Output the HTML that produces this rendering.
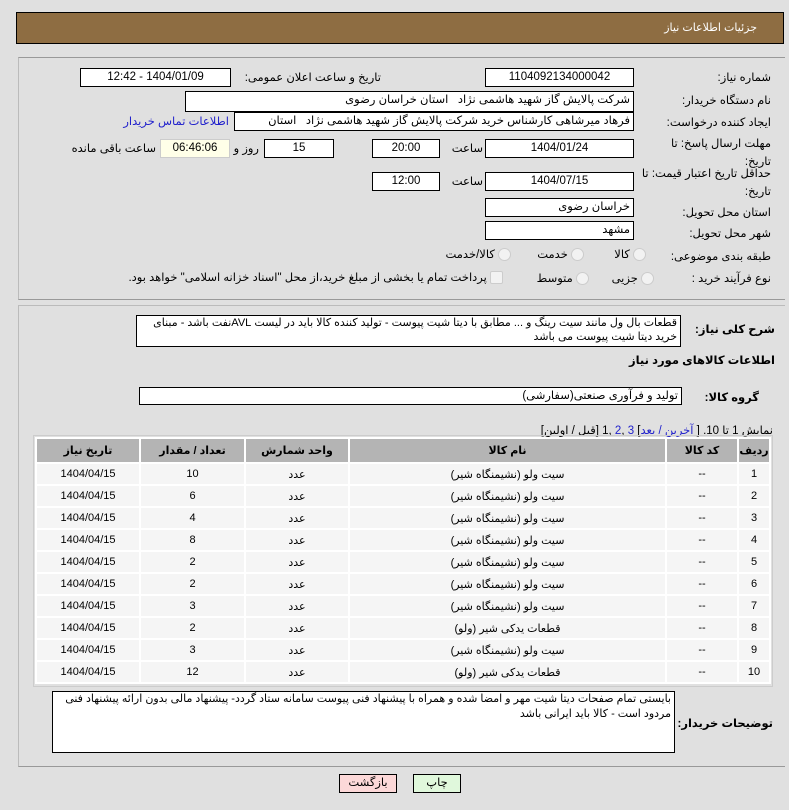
<!DOCTYPE html>
<html><head><meta charset="utf-8"><style>
body{margin:0;width:789px;height:810px;background:#e0e0e0;font-family:"Liberation Sans","DejaVu Sans",sans-serif;font-size:11px;color:#000;position:relative;overflow:hidden}
.a{position:absolute}
.box{position:absolute;background:#fff;border:1px solid #000;box-sizing:border-box;font-size:11.5px;line-height:17px;text-align:center;direction:rtl;white-space:nowrap;overflow:hidden}
.l{position:absolute;direction:rtl;white-space:nowrap;font-size:11.5px}
.b{font-weight:bold}
table{border-collapse:collapse;position:absolute;left:35px;top:437px;width:736px;font-size:11px;direction:rtl}
td,th{border:2px solid #fff;text-align:center;height:20px;padding:0}
th{background:#b4b4b4;height:23px}
td{background:#f5f5f5}
.rad{display:inline-block;width:11px;height:11px;border-radius:50%;border:1px solid #ccc;background:#f2f2f2;vertical-align:middle}
</style></head><body>
<div class="a" style="left:16px;top:12px;width:768px;height:32px;background:#8e6d42;border:1px solid #000;box-sizing:border-box"></div>
<div class="l" style="right:32px;top:21px;color:#fff;font-size:11px">جزئیات اطلاعات نیاز</div>
<div class="a" style="left:18px;top:57px;width:766px;height:241px;border-top:1px solid #999;border-left:1px solid #bbb;border-bottom:1px solid #999"></div>
<div class="a" style="left:18px;top:305px;width:766px;height:460px;border-top:1px solid #bbb;border-left:1px solid #bbb;border-bottom:1px solid #999"></div>

<div class="l" style="right:18px;top:70px">شماره نیاز:</div>
<div class="box" style="left:485px;top:68px;width:149px;height:19px">1104092134000042</div>
<div class="l" style="right:408px;top:70px">تاریخ و ساعت اعلان عمومی:</div>
<div class="box" style="left:80px;top:68px;width:151px;height:19px">1404/01/09 - 12:42</div>

<div class="l" style="right:18px;top:93px">نام دستگاه خریدار:</div>
<div class="box" style="left:185px;top:91px;width:449px;height:21px;text-align:right;padding-right:3px">شرکت پالایش گاز شهید هاشمی نژاد &nbsp; استان خراسان رضوی</div>

<div class="l" style="right:18px;top:115px">ایجاد کننده درخواست:</div>
<div class="box" style="left:234px;top:112px;width:400px;height:19px;text-align:right;padding-right:3px">فرهاد میرشاهی کارشناس خرید شرکت پالایش گاز شهید هاشمی نژاد &nbsp; استان</div>
<div class="l" style="right:560px;top:114px;color:#2222cc">اطلاعات تماس خریدار</div>

<div class="l" style="right:18px;top:135px;line-height:18px">مهلت ارسال پاسخ: تا<br>تاریخ:</div>
<div class="box" style="left:485px;top:139px;width:149px;height:19px">1404/01/24</div>
<div class="l" style="right:306px;top:141px">ساعت</div>
<div class="box" style="left:372px;top:139px;width:68px;height:19px">20:00</div>
<div class="box" style="left:264px;top:139px;width:70px;height:19px">15</div>
<div class="l" style="right:530px;top:141px">روز و</div>
<div class="box" style="left:160px;top:139px;width:70px;height:19px;background:#ffffe8;border-color:#ccc">06:46:06</div>
<div class="l" style="right:633px;top:141px">ساعت باقی مانده</div>

<div class="l" style="right:18px;top:165px;line-height:18px">حداقل تاریخ اعتبار قیمت: تا<br>تاریخ:</div>
<div class="box" style="left:485px;top:172px;width:149px;height:19px">1404/07/15</div>
<div class="l" style="right:306px;top:174px">ساعت</div>
<div class="box" style="left:372px;top:172px;width:68px;height:19px">12:00</div>

<div class="l" style="right:18px;top:205px">استان محل تحویل:</div>
<div class="box" style="left:485px;top:198px;width:149px;height:19px;text-align:right;padding-right:3px">خراسان رضوی</div>
<div class="l" style="right:18px;top:226px">شهر محل تحویل:</div>
<div class="box" style="left:485px;top:221px;width:149px;height:19px;text-align:right;padding-right:3px">مشهد</div>

<div class="l" style="right:18px;top:249px">طبقه بندی موضوعی:</div>
<div class="l" style="right:143px;top:247px"><span class="rad"></span> کالا</div>
<div class="l" style="right:205px;top:247px"><span class="rad"></span> خدمت</div>
<div class="l" style="right:278px;top:247px"><span class="rad"></span> کالا/خدمت</div>
<div class="l" style="right:18px;top:271px">نوع فرآیند خرید :</div>
<div class="l" style="right:135px;top:271px"><span class="rad"></span> جزیی</div>
<div class="l" style="right:200px;top:271px"><span class="rad"></span> متوسط</div>
<div class="l" style="right:286px;top:270px"><span class="rad" style="border-radius:2px"></span> پرداخت تمام یا بخشی از مبلغ خرید،از محل "اسناد خزانه اسلامی" خواهد بود.</div>

<div class="l b" style="right:14px;top:322px">شرح کلی نیاز:</div>
<div class="box" style="left:136px;top:315px;width:545px;height:32px;text-align:right;padding-right:3px;white-space:normal;line-height:14px;font-size:11px">قطعات بال ول مانند سیت رینگ و ...  مطابق با دیتا شیت پیوست - تولید کننده کالا باید در لیست AVLنفت باشد - مبنای خرید دیتا شیت پیوست می باشد</div>
<div class="l b" style="right:14px;top:353px">اطلاعات کالاهای مورد نیاز</div>
<div class="l b" style="right:30px;top:390px">گروه کالا:</div>
<div class="box" style="left:139px;top:387px;width:543px;height:18px;text-align:right;padding-right:3px;line-height:16px">تولید و فرآوری صنعتی(سفارشی)</div>
<div class="l" style="right:16px;top:423px">نمایش 1 تا 10. [ <span style="color:#22c">آخرین / بعد</span>] <span style="color:#22c">3</span> ,<span style="color:#22c">2</span> ,1 [قبل / اولین]</div>
<div class="a" style="left:33px;top:435px;width:740px;height:252px;border:1px solid #ccc;box-sizing:border-box"></div>
<table>
<tr><th style="width:30px">ردیف</th><th style="width:70px">کد کالا</th><th>نام کالا</th><th style="width:102px">واحد شمارش</th><th style="width:103px">تعداد / مقدار</th><th style="width:102px">تاریخ نیاز</th></tr>
<tr><td>1</td><td>--</td><td>سیت ولو (نشیمنگاه شیر)</td><td>عدد</td><td>10</td><td>1404/04/15</td></tr>
<tr><td>2</td><td>--</td><td>سیت ولو (نشیمنگاه شیر)</td><td>عدد</td><td>6</td><td>1404/04/15</td></tr>
<tr><td>3</td><td>--</td><td>سیت ولو (نشیمنگاه شیر)</td><td>عدد</td><td>4</td><td>1404/04/15</td></tr>
<tr><td>4</td><td>--</td><td>سیت ولو (نشیمنگاه شیر)</td><td>عدد</td><td>8</td><td>1404/04/15</td></tr>
<tr><td>5</td><td>--</td><td>سیت ولو (نشیمنگاه شیر)</td><td>عدد</td><td>2</td><td>1404/04/15</td></tr>
<tr><td>6</td><td>--</td><td>سیت ولو (نشیمنگاه شیر)</td><td>عدد</td><td>2</td><td>1404/04/15</td></tr>
<tr><td>7</td><td>--</td><td>سیت ولو (نشیمنگاه شیر)</td><td>عدد</td><td>3</td><td>1404/04/15</td></tr>
<tr><td>8</td><td>--</td><td>قطعات یدکی شیر (ولو)</td><td>عدد</td><td>2</td><td>1404/04/15</td></tr>
<tr><td>9</td><td>--</td><td>سیت ولو (نشیمنگاه شیر)</td><td>عدد</td><td>3</td><td>1404/04/15</td></tr>
<tr><td>10</td><td>--</td><td>قطعات یدکی شیر (ولو)</td><td>عدد</td><td>12</td><td>1404/04/15</td></tr>
</table>
<div class="l b" style="right:16px;top:716px">توضیحات خریدار:</div>
<div class="box" style="left:52px;top:691px;width:623px;height:62px;text-align:right;padding-right:3px;white-space:normal;line-height:15px;font-size:11px">بایستی تمام صفحات دیتا شیت مهر و امضا شده و همراه با پیشنهاد فنی پیوست سامانه ستاد گردد- پیشنهاد مالی بدون ارائه پیشنهاد فنی مردود است - کالا باید ایرانی باشد</div>
<div class="box" style="left:339px;top:774px;width:58px;height:19px;background:#fcd8d8">بازگشت</div>
<div class="box" style="left:413px;top:774px;width:48px;height:19px;background:#e0f8dc">چاپ</div>
</body></html>
